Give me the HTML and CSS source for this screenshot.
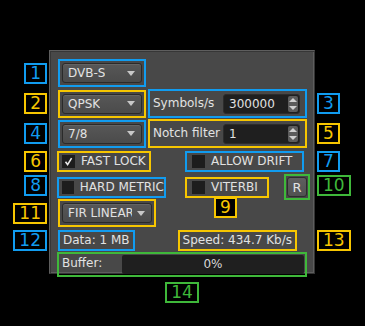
FILE: index.html
```html
<!DOCTYPE html>
<html lang="en">
<head>
    <meta charset="UTF-8">
    <title>DATV demodulator settings</title>
    <link rel="stylesheet" href="styles.css">
</head>
<body>
    <div class="stage">
        <div class="panel"></div>

        <!-- left callouts -->
        <span class="tag blue left at2">1</span>
        <span class="tag yellow left at3">2</span>
        <span class="tag blue left at4">4</span>
        <span class="tag yellow left at5">6</span>
        <span class="tag blue left at6">8</span>
        <span class="tag yellow left at7">11</span>
        <span class="tag blue left at8">12</span>

        <!-- right callouts -->
        <span class="tag blue right at3">3</span>
        <span class="tag yellow right at4">5</span>
        <span class="tag blue right at5">7</span>
        <span class="tag green right at6">10</span>
        <span class="tag yellow right at8">13</span>

        <!-- panel rows -->
        <div class="row at2">
            <div class="hl blue combo-hl">
                <div class="combo"><span class="combo-text">DVB-S</span><i class="arrow"></i></div>
            </div>
        </div>

        <div class="row at3">
            <div class="hl yellow combo-hl">
                <div class="combo"><span class="combo-text">QPSK</span><i class="arrow"></i></div>
            </div>
            <div class="hl blue field-hl">
                <span class="field-label">Symbols/s</span>
                <div class="spin">
                    <span class="spin-value">300000</span>
                    <div class="spin-btns"><i class="up"></i><i class="down"></i></div>
                </div>
            </div>
        </div>

        <div class="row at4">
            <div class="hl blue combo-hl">
                <div class="combo"><span class="combo-text">7/8</span><i class="arrow"></i></div>
            </div>
            <div class="hl yellow field-hl">
                <span class="field-label">Notch filter</span>
                <div class="spin">
                    <span class="spin-value">1</span>
                    <div class="spin-btns"><i class="up"></i><i class="down"></i></div>
                </div>
            </div>
        </div>

        <div class="row checks at5">
            <div class="hl yellow check w-fast">
                <span class="box"><svg width="13" height="13" viewBox="0 0 13 13"><path d="M3.5 6.8 L5.6 9.6 L9.6 3.2" fill="none" stroke="#e8e8e8" stroke-width="1.6"/></svg></span>
                <span>FAST LOCK</span>
            </div>
            <div class="hl blue check w-drift">
                <span class="box"></span>
                <span>ALLOW DRIFT</span>
            </div>
        </div>

        <div class="row checks at6">
            <div class="hl blue check w-hard">
                <span class="box"></span>
                <span>HARD METRIC</span>
            </div>
            <div class="hl yellow check w-viterbi">
                <span class="box"></span>
                <span>VITERBI</span>
            </div>
            <div class="hl green reset-hl">
                <button class="reset">R</button>
            </div>
        </div>

        <div class="row at7">
            <div class="hl yellow combo-hl">
                <div class="combo wide"><span class="combo-text">FIR LINEAR</span><i class="arrow"></i></div>
            </div>
            <span class="tag yellow inline">9</span>
        </div>

        <div class="row at8">
            <div class="hl blue stat">Data: 1 MB</div>
            <div class="hl yellow stat speed">Speed: 434.7 Kb/s</div>
        </div>

        <div class="row at9">
            <div class="hl green buffer">
                <span class="buffer-label">Buffer:</span>
                <div class="bar">0%</div>
            </div>
        </div>

        <span class="tag green bottom at11">14</span>
    </div>
</body>
</html>
```

FILE: styles.css
```css
body {
    margin: 0;
    background: #000;
    font-family: "DejaVu Sans", sans-serif;
    font-size: 12px;
    color: #e2e2e2;
}

/* whole picture: callouts left and right, the dialog in the middle */
.stage {
    display: grid;
    grid-template-columns: 49px 266px 50px;
    grid-template-rows: 8px 30px 31px 29px 26px 23px 32px 22px 26px 5px 21px;
    padding-top: 50px;
    width: 365px;
    height: 326px;
    box-sizing: border-box;
}

.at2 { grid-row: 2; }
.at3 { grid-row: 3; }
.at4 { grid-row: 4; }
.at5 { grid-row: 5; }
.at6 { grid-row: 6; }
.at7 { grid-row: 7; }
.at8 { grid-row: 8; }
.at9 { grid-row: 9; }
.at11 { grid-row: 11; }

.panel {
    grid-column: 2;
    grid-row: 1 / 10;
    margin-bottom: 3px;
    background: #484848;
    border: 1px solid;
    border-color: #5e5e5e #343434 #343434 #5e5e5e;
    box-shadow: inset 1px 1px 0 #363636, inset -1px -1px 0 #5e5e5e;
}

/* numbered callouts */
.tag {
    height: 21px;
    box-sizing: border-box;
    padding: 0 4px;
    border-width: 2px;
    border-style: solid;
    background: #000;
    font-size: 17px;
    line-height: 17px;
    align-self: center;
}

.tag.left {
    grid-column: 1;
    justify-self: end;
    margin-right: 2px;
}

.tag.right {
    grid-column: 3;
    justify-self: start;
    margin-left: 2px;
}

.tag.bottom {
    grid-column: 2;
    justify-self: center;
}

.tag.inline {
    align-self: flex-start;
    margin-left: 58px;
}

/* highlight frames around widgets */
.hl {
    border-width: 2px;
    border-style: solid;
    box-sizing: border-box;
}

.blue { border-color: #119cf0; color: #119cf0; }
.yellow { border-color: #f7c600; color: #f7c600; }
.green { border-color: #3fb83a; color: #3fb83a; }

.row .hl {
    color: #e2e2e2;
}

.row {
    grid-column: 2;
    display: flex;
    align-items: center;
    padding-left: 8px;
    z-index: 1;
}

.combo-hl {
    padding: 2px;
    margin-left: 1px;
}

.combo {
    width: 80px;
    height: 20px;
    box-sizing: border-box;
    display: flex;
    align-items: center;
    justify-content: space-between;
    padding: 0 6px 0 5px;
    background: linear-gradient(#575757, #4b4b4b);
    border: 1px solid #2a2a2a;
    border-radius: 3px;
    box-shadow: inset 0 1px 0 #646464;
}

.combo.wide {
    width: 90px;
}

.combo-text {
    white-space: nowrap;
    overflow: hidden;
}

.combo.wide .combo-text {
    width: 64px;
}

.arrow {
    width: 0;
    height: 0;
    border-left: 4px solid transparent;
    border-right: 4px solid transparent;
    border-top: 5px solid #c8c8c8;
    flex: none;
}

/* label + spin box */
.field-hl {
    display: flex;
    align-items: center;
    height: 29px;
    padding: 2px 5px 2px 2px;
    margin-left: 2px;
}

.field-label {
    width: 68px;
    padding-left: 1px;
    margin-right: 2px;
    line-height: 21px;
    white-space: nowrap;
}

.spin {
    width: 77px;
    height: 20px;
    box-sizing: border-box;
    display: flex;
    background: #1f1f1f;
    border: 1px solid #2c2c2c;
    border-radius: 3px;
}

.spin-value {
    flex: 1;
    padding-left: 5px;
    line-height: 18px;
}

.spin-btns {
    width: 10px;
    margin: 1px;
    display: flex;
    flex-direction: column;
    align-items: center;
    justify-content: space-around;
    background: #5c5c5c;
    border-radius: 2px;
}

.spin-btns .up,
.spin-btns .down {
    width: 0;
    height: 0;
    border-left: 4px solid transparent;
    border-right: 4px solid transparent;
}

.spin-btns .up { border-bottom: 4px solid #d0d0d0; }
.spin-btns .down { border-top: 4px solid #d0d0d0; }

/* check boxes */
.checks {
    display: grid;
    grid-template-columns: 128px auto auto;
    align-items: center;
    justify-items: start;
}

.check {
    height: 21px;
    display: flex;
    align-items: center;
    gap: 6px;
    padding-left: 3px;
    white-space: nowrap;
}

.w-fast { width: 94px; }
.w-drift { width: 119px; padding-left: 5px; }
.w-hard { width: 109px; }
.w-viterbi { width: 84px; padding-left: 5px; }

.box {
    width: 13px;
    height: 13px;
    background: #1d1d1d;
    display: flex;
}

.reset-hl {
    padding: 1px;
    margin-left: 10px;
}

.reset {
    width: 20px;
    height: 20px;
    padding: 0;
    font-family: inherit;
    font-size: 13px;
    color: #e2e2e2;
    background: linear-gradient(#5e5e5e, #515151);
    border: 1px solid #2c2c2c;
    border-radius: 3px;
    display: block;
}

/* status line */
.stat {
    height: 21px;
    line-height: 17px;
    padding: 0 3px;
    margin-left: 1px;
    white-space: nowrap;
}

.stat.speed {
    margin-left: 43px;
}

/* buffer gauge */
.buffer {
    width: 250px;
    height: 25px;
    display: flex;
    align-items: center;
    padding: 1px 1px 1px 0;
}

.buffer-label {
    width: 60px;
    padding-left: 3px;
    align-self: flex-start;
    line-height: 17px;
}

.bar {
    flex: 1;
    height: 19px;
    line-height: 19px;
    text-align: center;
    background: #1f1f1f;
    border-radius: 2px;
    color: #d8d8d8;
}
```
